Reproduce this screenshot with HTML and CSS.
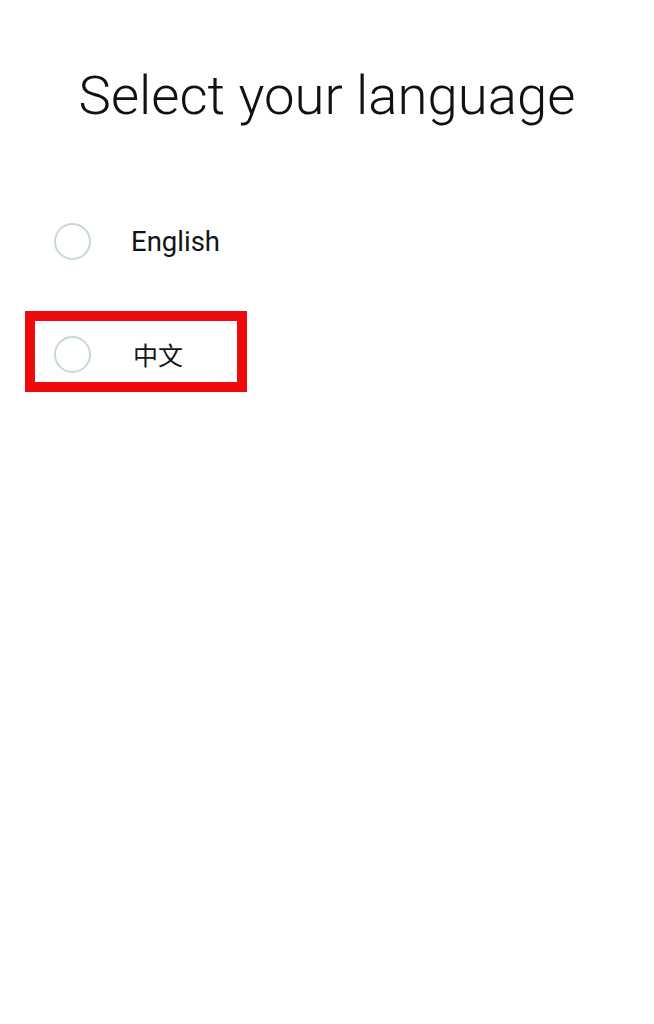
FILE: index.html
```html
<!DOCTYPE html>
<html lang="en">
<head>
<meta charset="utf-8">
<link rel="stylesheet" href="styles.css">
</head>
<body>
<main class="page">
  <h1 class="title">Select your language</h1>
  <ul class="options">
    <li class="option">
      <span class="radio"></span>
      <span class="label">English</span>
    </li>
    <li class="option highlighted">
      <span class="radio"></span>
      <span class="label cjk">中文</span>
      <span class="mark"></span>
    </li>
  </ul>
</main>
</body>
</html>
```

FILE: styles.css
```css
html, body {
  margin: 0;
  padding: 0;
  background: #ffffff;
}
.page {
  width: 654px;
  min-height: 1024px;
  font-family: Roboto, "Noto Sans CJK SC", sans-serif;
  color: #111111;
}
.title {
  margin: 0;
  padding-top: 62px;
  text-align: center;
  font-size: 54.5px;
  font-weight: 300;
  line-height: 66px;
  letter-spacing: 0;
}
.options {
  list-style: none;
  margin: 0;
  padding: 95px 0 0 54px;
  display: flex;
  flex-direction: column;
  gap: 77px;
}
.option {
  position: relative;
  display: flex;
  align-items: center;
  height: 36px;
}
.radio {
  box-sizing: border-box;
  width: 37px;
  height: 37px;
  border: 2px solid #c8d8d5;
  border-radius: 50%;
  flex: none;
}
.label {
  margin-left: 40px;
  font-size: 27.5px;
  font-weight: 400;
  color: #141414;
}
.label.cjk {
  margin-left: 42px;
  font-family: "Noto Sans CJK SC", sans-serif;
  font-size: 25px;
}
.mark {
  position: absolute;
  left: -29px;
  top: -25px;
  width: 222px;
  height: 81px;
  box-sizing: border-box;
  border: 10px solid #ee0b0b;
}
```
